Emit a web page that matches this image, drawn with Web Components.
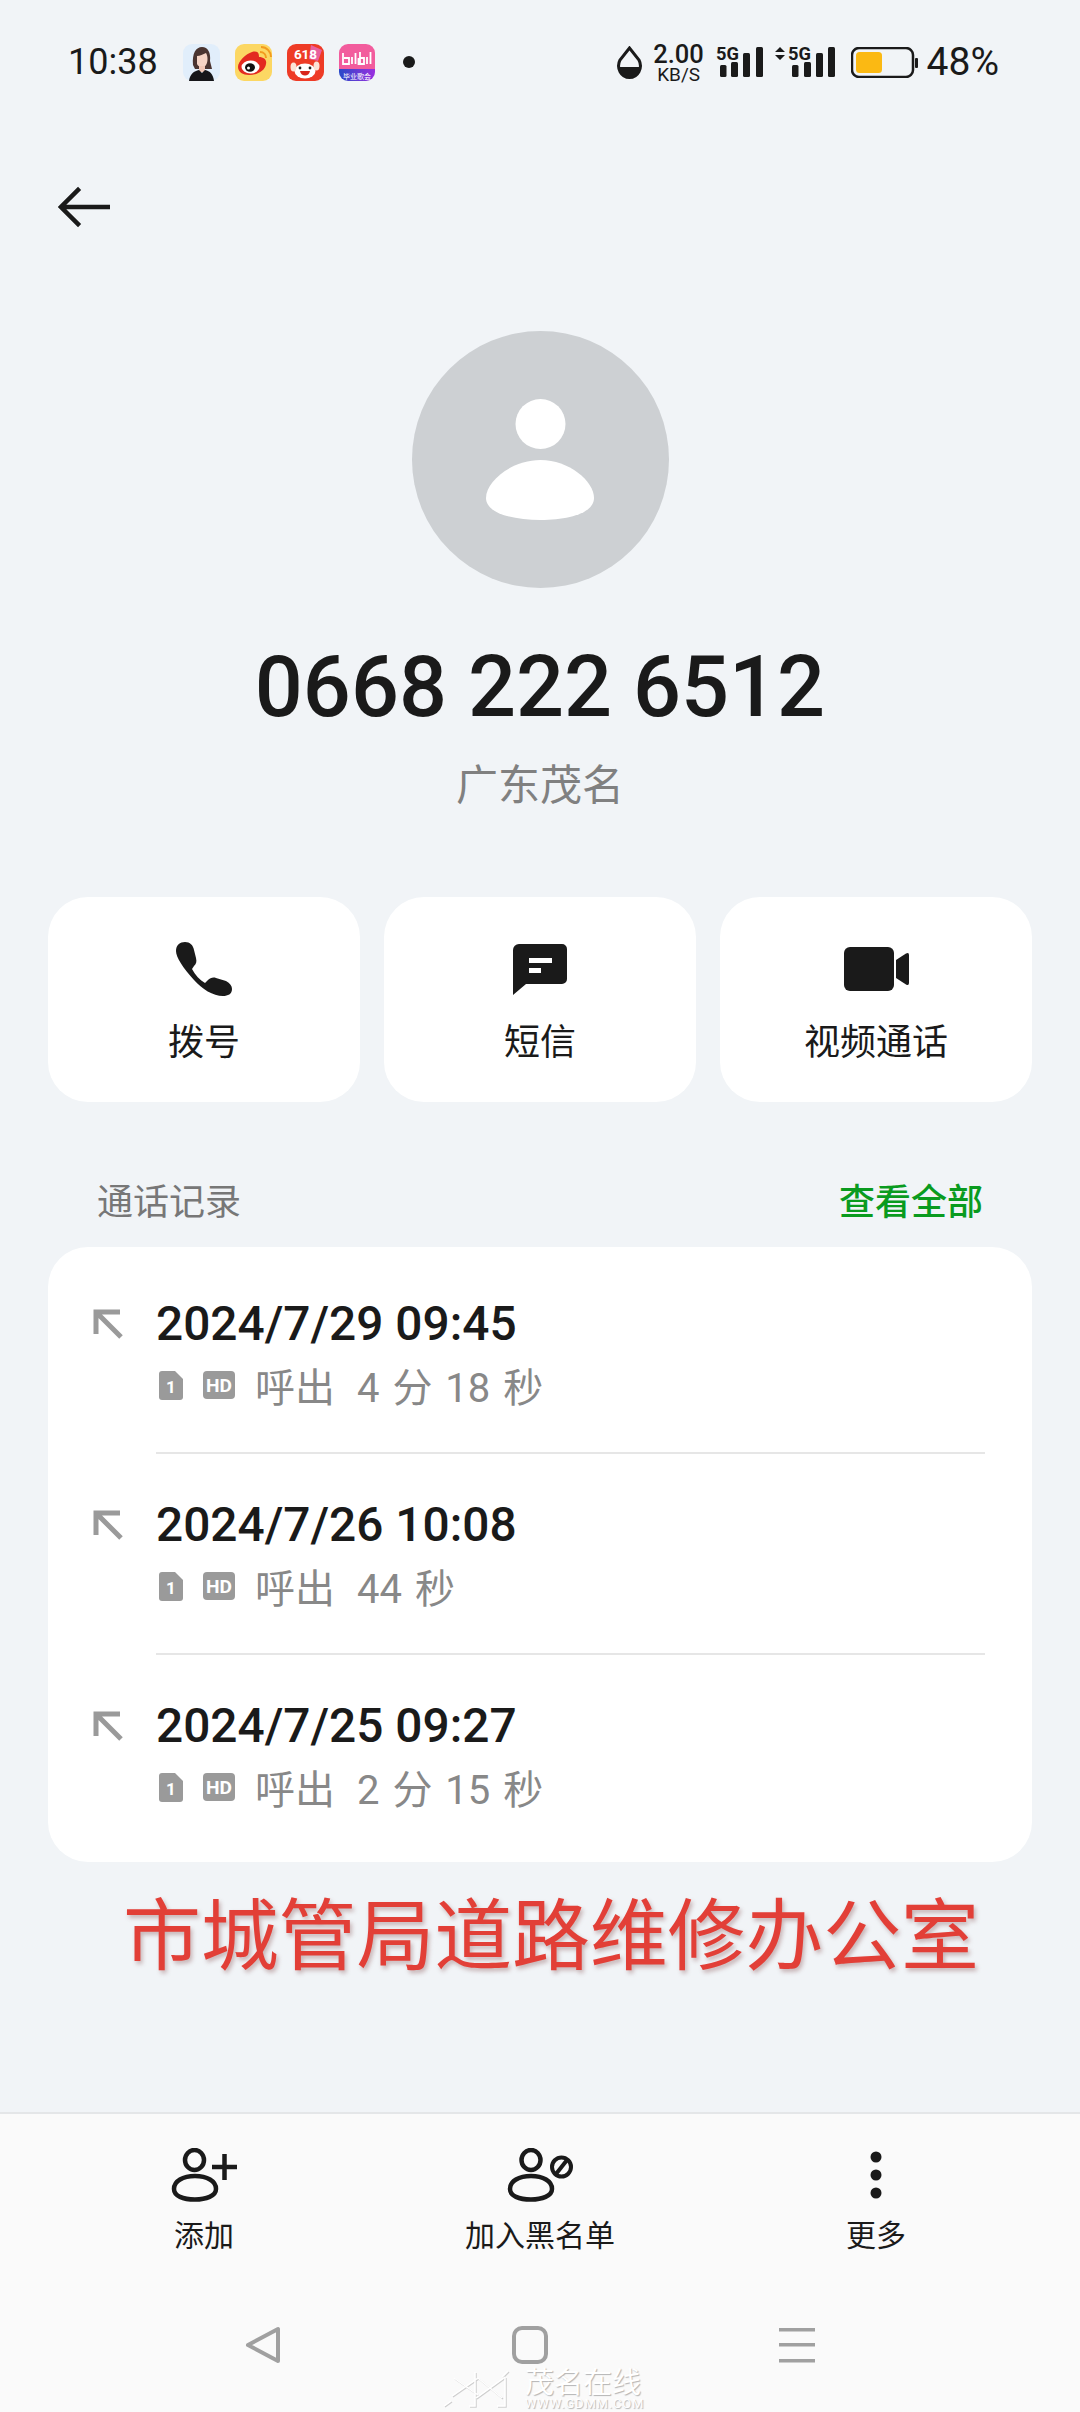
<!DOCTYPE html>
<html lang="zh">
<head>
<meta charset="utf-8">
<title>通话详情</title>
<style>
  html, body { margin: 0; padding: 0; }
  body {
    width: 1080px;
    height: 2412px;
    overflow: hidden;
    background: #f1f4f7;
    color: #1a1a1a;
    font-family: Roboto, "Noto Sans CJK SC", sans-serif;
    display: flex;
    flex-direction: column;
  }
  .grow { flex: 1; }
</style>
</head>
<body>
  <status-bar></status-bar>
  <back-bar></back-bar>
  <contact-header number="0668 222 6512" place="广东茂名"></contact-header>
  <action-row>
    <action-button>
      <svg slot="icon" width="56" height="54" viewBox="0 0 56 54"><path fill="#1a1a1a" d="M9 0C14 0 17 3 18 8L20 16C21 20 20 22 18 24L16 27C19 33 24 38 29 41L32 38C34 36 37 35 40 36L50 39C54 41 56 44 56 47C56 52 52 54 47 54C37 54 26 47 18 38C7 26 0 15 0 9C0 3 4 0 9 0Z"/></svg>
      拨号
    </action-button>
    <action-button>
      <svg slot="icon" width="54" height="51" viewBox="0 0 54 51"><path fill="#1a1a1a" d="M6 0H49A5 5 0 0 1 54 5V35A5 5 0 0 1 49 40H13L0 51V6A6 6 0 0 1 6 0Z"/><rect x="16" y="14" width="23" height="5" fill="#fff"/><rect x="16" y="24" width="12" height="5" fill="#fff"/></svg>
      短信
    </action-button>
    <action-button>
      <svg slot="icon" width="65" height="44" viewBox="0 0 65 44"><rect width="50" height="44" rx="6" fill="#1a1a1a"/><path fill="#1a1a1a" d="M52 13L62 6.500Q65 5 65 8V36Q65 39 62 37.500L52 31Z"/></svg>
      视频通话
    </action-button>
  </action-row>
  <call-section title="通话记录" link="查看全部">
    <call-row time="2024/7/29 09:45" detail="4 分 18 秒"></call-row>
    <call-row time="2024/7/26 10:08" detail="44 秒"></call-row>
    <call-row time="2024/7/25 09:27" detail="2 分 15 秒" last></call-row>
  </call-section>
  <red-caption>市城管局道路维修办公室</red-caption>
  <div class="grow"></div>
  <bottom-bar>
    <bottom-action>
      <svg slot="icon" width="66" height="54" viewBox="0 0 66 54" fill="none" stroke="#1a1a1a" stroke-width="4.500"><ellipse cx="23.500" cy="12" rx="9.500" ry="10"/><path d="M3 41C3 33 12 28 24 28C36 28 45 33 45 41C45 48 35 51.500 24 51.500C12 51.500 3 48 3 41Z"/><path d="M41 19H66M53.500 6V32"/></svg>
      添加
    </bottom-action>
    <bottom-action>
      <svg slot="icon" width="66" height="54" viewBox="0 0 66 54" fill="none" stroke="#1a1a1a" stroke-width="4.500"><ellipse cx="24" cy="12" rx="9.500" ry="10"/><path d="M3 41C3 33 12 28 24 28C36 28 45 33 45 41C45 48 35 51.500 24 51.500C12 51.500 3 48 3 41Z"/><circle cx="54.500" cy="19" r="9.500" stroke-width="4"/><path d="M49 26L60 12" stroke-width="4"/></svg>
      加入黑名单
    </bottom-action>
    <bottom-action>
      <svg slot="icon" width="66" height="54" viewBox="0 0 66 54" fill="#1a1a1a"><circle cx="33" cy="9" r="5.500"/><circle cx="33" cy="27" r="5.500"/><circle cx="33" cy="45" r="5.500"/></svg>
      更多
    </bottom-action>
  </bottom-bar>

<script>
// Shared text stack, CJK falls through to Noto
const FONT = 'Roboto, "Noto Sans CJK SC", sans-serif';

class StatusBar extends HTMLElement {
  constructor() {
    super();
    this.attachShadow({ mode: 'open' });
  }

  connectedCallback() {
    this.shadowRoot.innerHTML = `
      <style>
        :host {
          display: flex;
          align-items: center;
          height: 124px;
          padding: 0 81px 0 68px;
          font-family: ${FONT};
          color: #1a1a1a;
        }
        svg { display: block; flex: none; }
        .time { font-size: 36px; width: 115px; }
        .apps { display: flex; gap: 15px; align-items: center; }
        .dot { width: 12px; height: 12px; border-radius: 50%; background: #1a1a1a; margin-left: 28px; }
        .right { margin-left: auto; display: flex; align-items: center; }
        .speed { display: flex; flex-direction: column; align-items: center; width: 52px; margin-left: 11px; }
        .speed b { font-weight: 500; font-size: 25.500px; height: 24px; line-height: 24px; }
        .speed span { font-size: 19px; height: 17px; line-height: 17px; }
        .signal { margin-left: 11px; }
        .battery { margin-left: 16px; }
        .pct { font-size: 39px; margin-left: 9px; }
      </style>
      <div class="time">10:38</div>
      <div class="apps">
        <svg width="37" height="37" viewBox="0 0 37 37"><rect width="37" height="37" rx="9" fill="#e1eefb"/><path fill="#4a3430" d="M10 21C9 9 13 3 19 3C25 3 28 9 27 17L29 25H12Z"/><path fill="#f5d3c4" d="M14 12C17 12 20 10 23 9C25 12 25 18 23 21C21 24 16 24 14 20Z"/><rect x="16" y="22" width="6" height="6" fill="#f1c7b6"/><path fill="#16161a" d="M6 37C7 30 11 27 16 26L19 29L22 26C27 27 30 30 31 37Z"/></svg>
        <svg width="37" height="37" viewBox="0 0 37 37"><rect width="37" height="37" rx="9" fill="#fcd763"/><path fill="#e32a20" d="M17 8C24 6 24 11 24 13C29 13 32 16 31 20C30 27 22 31 14 31C8 31 3 28 3 23C3 17 11 10 17 8Z"/><ellipse cx="15.500" cy="23" rx="9" ry="6.500" fill="#fff"/><ellipse cx="15" cy="23.500" rx="5" ry="4.200" fill="#111"/><circle cx="13.500" cy="24" r="1.500" fill="#fff"/><path d="M25 8C29 8 31 11 31 14M26 3C32 3 36 8 36 13" fill="none" stroke="#f29b1e" stroke-width="2"/></svg>
        <svg width="37" height="37" viewBox="0 0 37 37"><rect width="37" height="37" rx="9" fill="#ee3b26"/><path fill="#e9609f" d="M24 1L35 6L31 17L22 15Z"/><text x="18.500" y="15" font-family="Roboto, sans-serif" font-size="13.500" font-weight="700" fill="#fff" text-anchor="middle">618</text><ellipse cx="18" cy="27" rx="10.500" ry="7.500" fill="#fff"/><ellipse cx="6.500" cy="23" rx="3" ry="4.500" fill="#fbe3d6"/><ellipse cx="29.500" cy="22" rx="3" ry="4.500" fill="#fbe3d6"/><circle cx="13" cy="24" r="1.400" fill="#222"/><circle cx="23" cy="24" r="1.400" fill="#222"/><path fill="#d8261c" d="M13 27H23C22 33 14 33 13 27Z"/></svg>
        <svg width="36" height="37" viewBox="0 0 36 37"><defs><linearGradient id="bl" x1="0" x2="1"><stop offset="0" stop-color="#2a49c8"/><stop offset="1" stop-color="#9a2fe0"/></linearGradient></defs><clipPath id="bc"><rect width="36" height="37" rx="9"/></clipPath><g clip-path="url(#bc)"><rect width="36" height="25" fill="#f25c9d"/><rect y="25" width="36" height="12" fill="url(#bl)"/><path d="M4 9V20H10V14H5M13 13V20M16.500 9V20M19.500 14V20H25V14H21M21 8V20M28 13V20M31.500 8V20" fill="none" stroke="#fff" stroke-width="1.800"/><text x="18" y="34.500" font-family="Noto Sans CJK SC, sans-serif" font-size="7" fill="#fff" text-anchor="middle">毕业歌会</text></g></svg>
      </div>
      <div class="dot"></div>
      <div class="right">
        <svg width="25" height="33" viewBox="0 0 25 33"><path d="M12.500 2L3 14C-1 22 4 31.500 12.500 31.500C21 31.500 26 22 22 14Z" fill="none" stroke="#1a1a1a" stroke-width="3"/><path d="M1.500 21H23.500C23 28 18 32 12.500 32C7 32 2 28 1.500 21Z" fill="#1a1a1a"/></svg>
        <div class="speed"><b>2.00</b><span>KB/S</span></div>
        <svg class="signal" width="47" height="40" viewBox="0 0 47 40">
          <text x="0" y="18" font-family="Roboto, sans-serif" font-size="19" font-weight="700" fill="#1a1a1a" textLength="23" lengthAdjust="spacingAndGlyphs">5G</text>
          <rect x="4" y="23" width="6.500" height="12" rx="1.500" fill="#1a1a1a"/><rect x="15" y="20" width="7" height="15" rx="1.500" fill="#1a1a1a"/><rect x="27" y="11" width="7" height="24" rx="1.500" fill="#1a1a1a"/><rect x="40" y="5" width="7" height="30" rx="1.500" fill="#1a1a1a"/>
        </svg>
        <svg class="signal" style="margin-left:12px" width="60" height="40" viewBox="0 0 60 40">
          <path d="M0 10L5 5L10 10ZM0 13H10L5 18Z" fill="#1a1a1a"/>
          <text x="13" y="18" font-family="Roboto, sans-serif" font-size="19" font-weight="700" fill="#1a1a1a" textLength="23" lengthAdjust="spacingAndGlyphs">5G</text>
          <rect x="17" y="23" width="6.500" height="12" rx="1.500" fill="#1a1a1a"/><rect x="29" y="20" width="7" height="15" rx="1.500" fill="#1a1a1a"/><rect x="41" y="11" width="7" height="24" rx="1.500" fill="#1a1a1a"/><rect x="53" y="5" width="7" height="30" rx="1.500" fill="#1a1a1a"/>
        </svg>
        <svg class="battery" width="67" height="31" viewBox="0 0 67 31"><rect x="1" y="1" width="61" height="29" rx="7" fill="none" stroke="#1a1a1a" stroke-width="2.500"/><rect x="5" y="5" width="26" height="21" rx="3.500" fill="#fbb913"/><rect x="64" y="11" width="3" height="10" rx="1" fill="#1a1a1a"/></svg>
        <div class="pct">48%</div>
      </div>
    `;
  }
}

class BackBar extends HTMLElement {
  constructor() {
    super();
    this.attachShadow({ mode: 'open' });
  }

  connectedCallback() {
    this.shadowRoot.innerHTML = `
      <style>
        :host { display: flex; align-items: center; height: 166px; padding: 0 0 0 58px; box-sizing: border-box; margin-bottom: 41px; }
        svg { display: block; }
      </style>
      <svg width="52" height="42" viewBox="0 0 53 42" fill="none" stroke="#1a1a1a" stroke-width="4.500"><path d="M53 21H3M22 2L3 21L22 40"/></svg>
    `;
  }
}

class ContactHeader extends HTMLElement {
  constructor() {
    super();
    this.attachShadow({ mode: 'open' });
  }

  connectedCallback() {
    const number = this.getAttribute('number') || '';
    const place = this.getAttribute('place') || '';
    this.shadowRoot.innerHTML = `
      <style>
        :host { display: flex; flex-direction: column; align-items: center; font-family: ${FONT}; }
        svg { display: block; }
        .number { font-size: 84.500px; font-weight: 500; line-height: 100px; margin-top: 50px; color: #1a1a1a; }
        .place { font-size: 42px; line-height: 60px; color: #808080; margin-top: 18px; }
      </style>
      <svg width="257" height="257" viewBox="0 0 257 257">
        <circle cx="128.500" cy="128.500" r="128.500" fill="#cdd0d3"/>
        <circle cx="128.500" cy="93" r="25" fill="#fff"/>
        <path fill="#fff" d="M128.500 129C157 129 182 150 182 167C182 182 157 189 128.500 189C100 189 74 182 74 167C74 150 100 129 128.500 129Z"/>
      </svg>
      <div class="number">${number}</div>
      <div class="place">${place}</div>
    `;
  }
}

class ActionRow extends HTMLElement {
  constructor() {
    super();
    this.attachShadow({ mode: 'open' });
    this.shadowRoot.innerHTML = `
      <style>
        :host { display: grid; grid-template-columns: repeat(3, 1fr); gap: 24px; padding: 0 48px; margin-top: 81px; }
      </style>
      <slot></slot>
    `;
  }
}

class ActionButton extends HTMLElement {
  constructor() {
    super();
    this.attachShadow({ mode: 'open' });
    this.shadowRoot.innerHTML = `
      <style>
        :host {
          display: flex;
          flex-direction: column;
          align-items: center;
          height: 205px;
          background: #fff;
          border-radius: 40px;
          font-family: ${FONT};
          font-size: 36px;
          color: #1a1a1a;
        }
        .icon { height: 54px; margin-top: 45px; display: flex; align-items: center; }
        .label { line-height: 50px; margin-top: 22px; }
      </style>
      <div class="icon"><slot name="icon"></slot></div>
      <div class="label"><slot></slot></div>
    `;
  }
}

class CallSection extends HTMLElement {
  constructor() {
    super();
    this.attachShadow({ mode: 'open' });
  }

  connectedCallback() {
    this.shadowRoot.innerHTML = `
      <style>
        :host { display: block; padding: 0 48px; margin-top: 64px; font-family: ${FONT}; }
        .head { display: flex; justify-content: space-between; align-items: center; height: 81px; box-sizing: border-box; padding: 0 49px 8px; font-size: 36px; line-height: 50px; }
        .title { color: #777; }
        .link { color: #0a9b1f; font-weight: 500; }
        .card { background: #fff; border-radius: 40px; display: flex; flex-direction: column; padding-top: 6px; }
      </style>
      <div class="head"><span class="title">${this.getAttribute('title')}</span><span class="link">${this.getAttribute('link')}</span></div>
      <div class="card"><slot></slot></div>
    `;
  }
}

class CallRow extends HTMLElement {
  constructor() {
    super();
    this.attachShadow({ mode: 'open' });
  }

  connectedCallback() {
    const last = this.hasAttribute('last');
    this.shadowRoot.innerHTML = `
      <style>
        :host { display: flex; height: ${last ? 207 : 201}px; padding-left: 45px; font-family: ${FONT}; box-sizing: border-box; }
        svg { display: block; flex: none; }
        .arrow { margin: 56px 33px 0 0; }
        .body { flex: 1; margin-right: 47px; border-bottom: ${last ? 'none' : '2px solid #e6e6e6'}; padding-top: 43px; box-sizing: border-box; }
        .time { font-size: 47.800px; font-weight: 500; line-height: 56px; color: #1a1a1a; }
        .meta { display: flex; align-items: center; margin-top: 7px; height: 52px; color: #888; font-size: 40px; word-spacing: 3px; }
        .meta .hd { margin-left: 20px; }
        .meta span { margin-left: 20px; }
        .meta span + span { margin-left: 22px; }
      </style>
      <svg class="arrow" width="30" height="30" viewBox="0 0 30 30" fill="none" stroke="#9a9a9a" stroke-width="5"><path d="M28 28L4 4M27 3H3V25"/></svg>
      <div class="body">
        <div class="time">${this.getAttribute('time')}</div>
        <div class="meta">
          <svg style="margin-left:3px" width="24" height="29" viewBox="0 0 24 29"><path fill="#9a9a9a" d="M3 0H16L24 8V26A3 3 0 0 1 21 29H3A3 3 0 0 1 0 26V3A3 3 0 0 1 3 0Z"/><text x="12" y="22" font-family="Roboto, sans-serif" font-size="17" font-weight="700" fill="#fff" text-anchor="middle">1</text></svg>
          <svg class="hd" width="32" height="28" viewBox="0 0 32 28"><rect width="32" height="28" rx="4" fill="#9a9a9a"/><text x="16" y="20.500" font-family="Roboto, sans-serif" font-size="18" font-weight="700" fill="#fff" text-anchor="middle" textLength="26" lengthAdjust="spacingAndGlyphs">HD</text></svg>
          <span>呼出</span><span>${this.getAttribute('detail')}</span>
        </div>
      </div>
    `;
  }
}

class RedCaption extends HTMLElement {
  constructor() {
    super();
    this.attachShadow({ mode: 'open' });
    this.shadowRoot.innerHTML = `
      <style>
        :host {
          display: block;
          margin-top: 13px;
          padding-left: 123px;
          font-family: "Noto Sans CJK SC", sans-serif;
          font-size: 78px;
          font-weight: 400;
          line-height: 110px;
          color: #e23f37;
          text-shadow: 2px 3px 4px rgba(120, 60, 60, 0.35);
          white-space: nowrap;
          letter-spacing: -0.200px;
        }
      </style>
      <slot></slot>
    `;
  }
}

class BottomBar extends HTMLElement {
  constructor() {
    super();
    this.attachShadow({ mode: 'open' });
    this.shadowRoot.innerHTML = `
      <style>
        :host {
          display: block;
          position: relative;
          height: 300px;
          box-sizing: border-box;
          background: #fafafa;
          border-top: 2px solid #e4e6e8;
          font-family: ${FONT};
        }
        .actions { display: grid; grid-template-columns: 336px 336px 336px; justify-content: center; padding-top: 34px; }
        .nav { display: flex; justify-content: center; gap: 231px; margin-top: 69px; padding-right: 20px; }
        .nav svg { display: block; }
        .mark { position: absolute; left: 442px; top: 256px; display: flex; gap: 13px; color: #fff; text-shadow: 1px 1px 1px #b4b4b4; }
        .mark .name { font-size: 29px; line-height: 26px; }
        .mark .url { font-size: 13px; line-height: 16px; letter-spacing: 0.800px; }
        .mark svg { filter: drop-shadow(1px 1px 0 #cfcfcf); }
      </style>
      <div class="actions"><slot></slot></div>
      <div class="nav">
        <svg width="36" height="38" viewBox="0 0 36 38" fill="none" stroke="#a0a0a0" stroke-width="4" stroke-linejoin="round"><path d="M33 3V35L3 19Z"/></svg>
        <svg width="36" height="38" viewBox="0 0 36 38" fill="none" stroke="#a0a0a0" stroke-width="4"><rect x="2" y="2" width="32" height="34" rx="8"/></svg>
        <svg width="36" height="38" viewBox="0 0 36 38" fill="#a0a0a0"><rect y="2" width="36" height="3.500"/><rect y="17" width="36" height="3.500"/><rect y="33" width="36" height="3.500"/></svg>
      </div>
      <div class="mark">
        <svg width="70" height="38" viewBox="0 0 70 38" fill="none" stroke="#fff" stroke-width="1.500"><path d="M33 2V36H27M12 8L36 25M10 26L36 8M34 28L63 7M63 7V36H55M36 8L60 28M66 1L60 7M2 36L9 31"/></svg>
        <div><div class="name">茂名在线</div><div class="url">WWW.GDMM.COM</div></div>
      </div>
    `;
  }
}

class BottomAction extends HTMLElement {
  constructor() {
    super();
    this.attachShadow({ mode: 'open' });
    this.shadowRoot.innerHTML = `
      <style>
        :host { display: flex; flex-direction: column; align-items: center; font-size: 30px; color: #1a1a1a; }
        .icon { height: 54px; }
        .label { line-height: 42px; margin-top: 13px; }
      </style>
      <div class="icon"><slot name="icon"></slot></div>
      <div class="label"><slot></slot></div>
    `;
  }
}

customElements.define('status-bar', StatusBar);
customElements.define('back-bar', BackBar);
customElements.define('contact-header', ContactHeader);
customElements.define('action-row', ActionRow);
customElements.define('action-button', ActionButton);
customElements.define('call-section', CallSection);
customElements.define('call-row', CallRow);
customElements.define('red-caption', RedCaption);
customElements.define('bottom-bar', BottomBar);
customElements.define('bottom-action', BottomAction);
</script>
</body>
</html>
